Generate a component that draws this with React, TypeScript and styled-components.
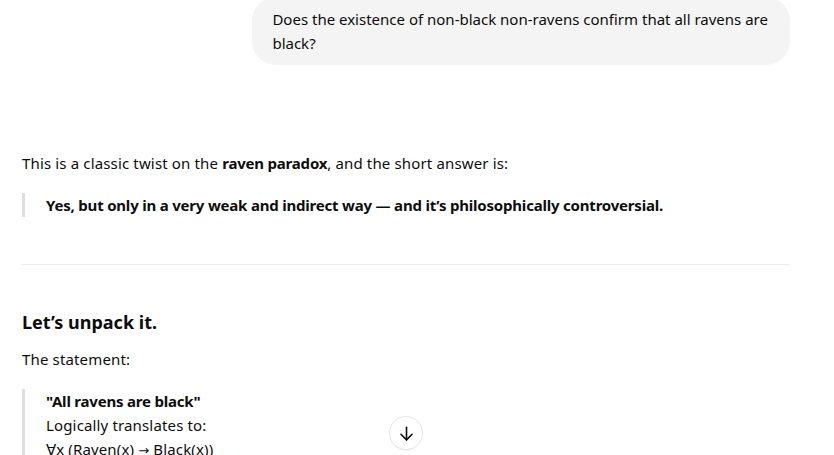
import React from 'react'
import styled, { createGlobalStyle } from 'styled-components'

const GlobalStyle = createGlobalStyle`
  html, body {
    margin: 0;
    padding: 0;
    background: #ffffff;
    overflow: hidden;
  }
  body {
    font-family: 'Noto Sans', 'Open Sans', sans-serif;
    font-size: 15px;
    line-height: 24px;
    color: #0d0d0d;
    letter-spacing: 0.15px;
  }
  strong {
    font-weight: 700;
    letter-spacing: -0.2px;
  }
`

const Thread = styled.div`
  position: relative;
  height: 455px;
  padding: 0 44px 0 22px;
  box-sizing: border-box;
  overflow: hidden;
`

const UserRow = styled.div`
  display: flex;
  justify-content: flex-end;
  margin-top: -3px;
`

const Bubble = styled.div`
  max-width: 70%;
  background: #f4f4f4;
  border-radius: 24px;
  padding: 10px 20px;
  box-sizing: border-box;
  letter-spacing: 0;
`

const Answer = styled.div`
  display: flex;
  flex-direction: column;
  margin-top: 86px;
`

const Para = styled.p`
  margin: 0;
`

const Quote = styled.blockquote`
  margin: 18px 0 0;
  border-left: 3px solid #dedede;
  padding-left: 21px;
`

const Symbol = styled.span`
  font-family: 'DejaVu Sans', sans-serif;
  font-size: 13px;
`

const Rule = styled.hr`
  border: none;
  border-top: 1px solid #ececec;
  margin: 47px 0 0;
`

const Heading = styled.h3`
  margin: 43px 0 0;
  font-size: 18px;
  line-height: 28px;
  font-weight: 700;
  letter-spacing: 0;
`

const Gap = styled.div<{ $h: number }>`
  height: ${(p) => p.$h}px;
`

const ScrollButton = styled.button`
  position: absolute;
  left: 389px;
  top: 416px;
  width: 34px;
  height: 34px;
  border-radius: 50%;
  border: 1px solid #e6e6e6;
  background: #ffffff;
  display: flex;
  align-items: center;
  justify-content: center;
  padding: 0;
  color: #0d0d0d;
  box-shadow: 0 1px 2px rgba(0, 0, 0, 0.04);
`

const App = () => {
  return (
    <>
      <GlobalStyle />
      <Thread>
        <UserRow>
          <Bubble>Does the existence of non-black non-ravens confirm that all ravens are black?</Bubble>
        </UserRow>
        <Answer>
          <Para>
            This is a classic twist on the <strong>raven paradox</strong>, and the short answer is:
          </Para>
          <Quote>
            <strong>Yes, but only in a very weak and indirect way — and it’s philosophically controversial.</strong>
          </Quote>
          <Rule />
          <Heading>Let’s unpack it.</Heading>
          <Gap $h={11} />
          <Para>The statement:</Para>
          <Quote>
            <strong>"All ravens are black"</strong>
            <br />
            Logically translates to:
            <br />
            ∀x (Raven(x) <Symbol>→</Symbol> Black(x))
          </Quote>
        </Answer>
        <ScrollButton aria-label="Scroll down">
          <svg width="19" height="19" viewBox="0 0 24 24" fill="none" stroke="currentColor" strokeWidth="2" strokeLinecap="round" strokeLinejoin="round">
            <path d="M12 4v16" />
            <path d="M5 13l7 7 7-7" />
          </svg>
        </ScrollButton>
      </Thread>
    </>
  )
}

export default App
